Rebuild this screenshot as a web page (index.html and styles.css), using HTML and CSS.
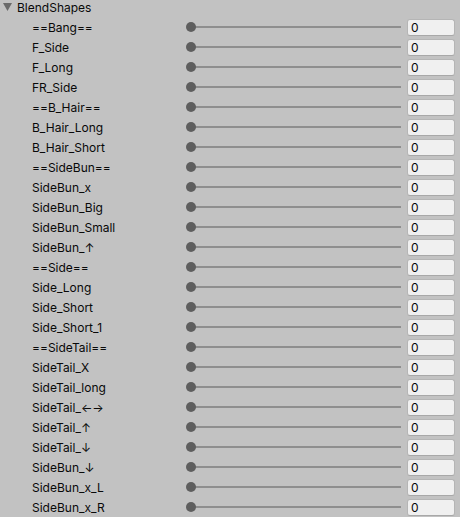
FILE: index.html
```html
<!DOCTYPE html>
<html>
<head>
<meta charset="utf-8">
<link rel="stylesheet" href="styles.css">
</head>
<body>
<div class="panel">
  <div class="header">
    <svg class="fold" width="12" height="10" viewBox="0 0 12 10"><polygon points="0,1 9,1 4.5,9" fill="#6a6a6a"/></svg>
    <span class="title">BlendShapes</span>
  </div>
  <div class="row"><span class="label">==Bang==</span><div class="slider"><span class="track"></span><span class="thumb"></span></div><div class="field">0</div></div>
  <div class="row"><span class="label">F_Side</span><div class="slider"><span class="track"></span><span class="thumb"></span></div><div class="field">0</div></div>
  <div class="row"><span class="label">F_Long</span><div class="slider"><span class="track"></span><span class="thumb"></span></div><div class="field">0</div></div>
  <div class="row"><span class="label">FR_Side</span><div class="slider"><span class="track"></span><span class="thumb"></span></div><div class="field">0</div></div>
  <div class="row"><span class="label">==B_Hair==</span><div class="slider"><span class="track"></span><span class="thumb"></span></div><div class="field">0</div></div>
  <div class="row"><span class="label">B_Hair_Long</span><div class="slider"><span class="track"></span><span class="thumb"></span></div><div class="field">0</div></div>
  <div class="row"><span class="label">B_Hair_Short</span><div class="slider"><span class="track"></span><span class="thumb"></span></div><div class="field">0</div></div>
  <div class="row"><span class="label">==SideBun==</span><div class="slider"><span class="track"></span><span class="thumb"></span></div><div class="field">0</div></div>
  <div class="row"><span class="label">SideBun_x</span><div class="slider"><span class="track"></span><span class="thumb"></span></div><div class="field">0</div></div>
  <div class="row"><span class="label">SideBun_Big</span><div class="slider"><span class="track"></span><span class="thumb"></span></div><div class="field">0</div></div>
  <div class="row"><span class="label">SideBun_Small</span><div class="slider"><span class="track"></span><span class="thumb"></span></div><div class="field">0</div></div>
  <div class="row"><span class="label">SideBun_↑</span><div class="slider"><span class="track"></span><span class="thumb"></span></div><div class="field">0</div></div>
  <div class="row"><span class="label">==Side==</span><div class="slider"><span class="track"></span><span class="thumb"></span></div><div class="field">0</div></div>
  <div class="row"><span class="label">Side_Long</span><div class="slider"><span class="track"></span><span class="thumb"></span></div><div class="field">0</div></div>
  <div class="row"><span class="label">Side_Short</span><div class="slider"><span class="track"></span><span class="thumb"></span></div><div class="field">0</div></div>
  <div class="row"><span class="label">Side_Short_1</span><div class="slider"><span class="track"></span><span class="thumb"></span></div><div class="field">0</div></div>
  <div class="row"><span class="label">==SideTail==</span><div class="slider"><span class="track"></span><span class="thumb"></span></div><div class="field">0</div></div>
  <div class="row"><span class="label">SideTail_X</span><div class="slider"><span class="track"></span><span class="thumb"></span></div><div class="field">0</div></div>
  <div class="row"><span class="label">SideTail_long</span><div class="slider"><span class="track"></span><span class="thumb"></span></div><div class="field">0</div></div>
  <div class="row"><span class="label">SideTail_←→</span><div class="slider"><span class="track"></span><span class="thumb"></span></div><div class="field">0</div></div>
  <div class="row"><span class="label">SideTail_↑</span><div class="slider"><span class="track"></span><span class="thumb"></span></div><div class="field">0</div></div>
  <div class="row"><span class="label">SideTail_↓</span><div class="slider"><span class="track"></span><span class="thumb"></span></div><div class="field">0</div></div>
  <div class="row"><span class="label">SideBun_↓</span><div class="slider"><span class="track"></span><span class="thumb"></span></div><div class="field">0</div></div>
  <div class="row"><span class="label">SideBun_x_L</span><div class="slider"><span class="track"></span><span class="thumb"></span></div><div class="field">0</div></div>
  <div class="row"><span class="label">SideBun_x_R</span><div class="slider"><span class="track"></span><span class="thumb"></span></div><div class="field">0</div></div>
</div>
</body>
</html>
```

FILE: styles.css
```css
html, body {
  margin: 0;
  padding: 0;
  background: #c2c2c2;
  overflow: hidden;
}
.panel {
  margin-top: -2px;
  display: flex;
  flex-direction: column;
  gap: 2px;
  font-family: Inter, "Noto Sans", "DejaVu Sans", sans-serif;
  font-size: 12px;
  font-feature-settings: "liga" 0, "calt" 0;
  font-variant-ligatures: none;
  color: #090909;
}
.header {
  height: 18px;
  display: flex;
  align-items: center;
  padding-left: 3px;
}
.fold {
  display: block;
  margin-right: 2px;
  margin-top: -1px;
}
.title {
  padding-top: 2px;
  line-height: 16px;
}
.row {
  height: 18px;
  display: grid;
  grid-template-columns: 148px 215px 48px;
  column-gap: 6px;
  padding: 0 5px 0 32px;
  align-items: center;
}
.label {
  padding-top: 2px;
  line-height: 16px;
  white-space: nowrap;
}
.slider {
  position: relative;
  height: 18px;
}
.track {
  position: absolute;
  left: 5px;
  right: 0;
  top: 8px;
  height: 2px;
  background: #8e8e8e;
}
.thumb {
  position: absolute;
  left: 0;
  top: 4px;
  width: 10px;
  height: 10px;
  border-radius: 50%;
  background: #5e5e5e;
}
.field {
  box-sizing: border-box;
  height: 17px;
  margin-top: 1px;
  background: #f0f0f0;
  border: 1px solid #b5b5b5;
  border-bottom-color: #a8a8a8;
  border-radius: 3px;
  padding-left: 3px;
  line-height: 15px;
  color: #090909;
}
```
